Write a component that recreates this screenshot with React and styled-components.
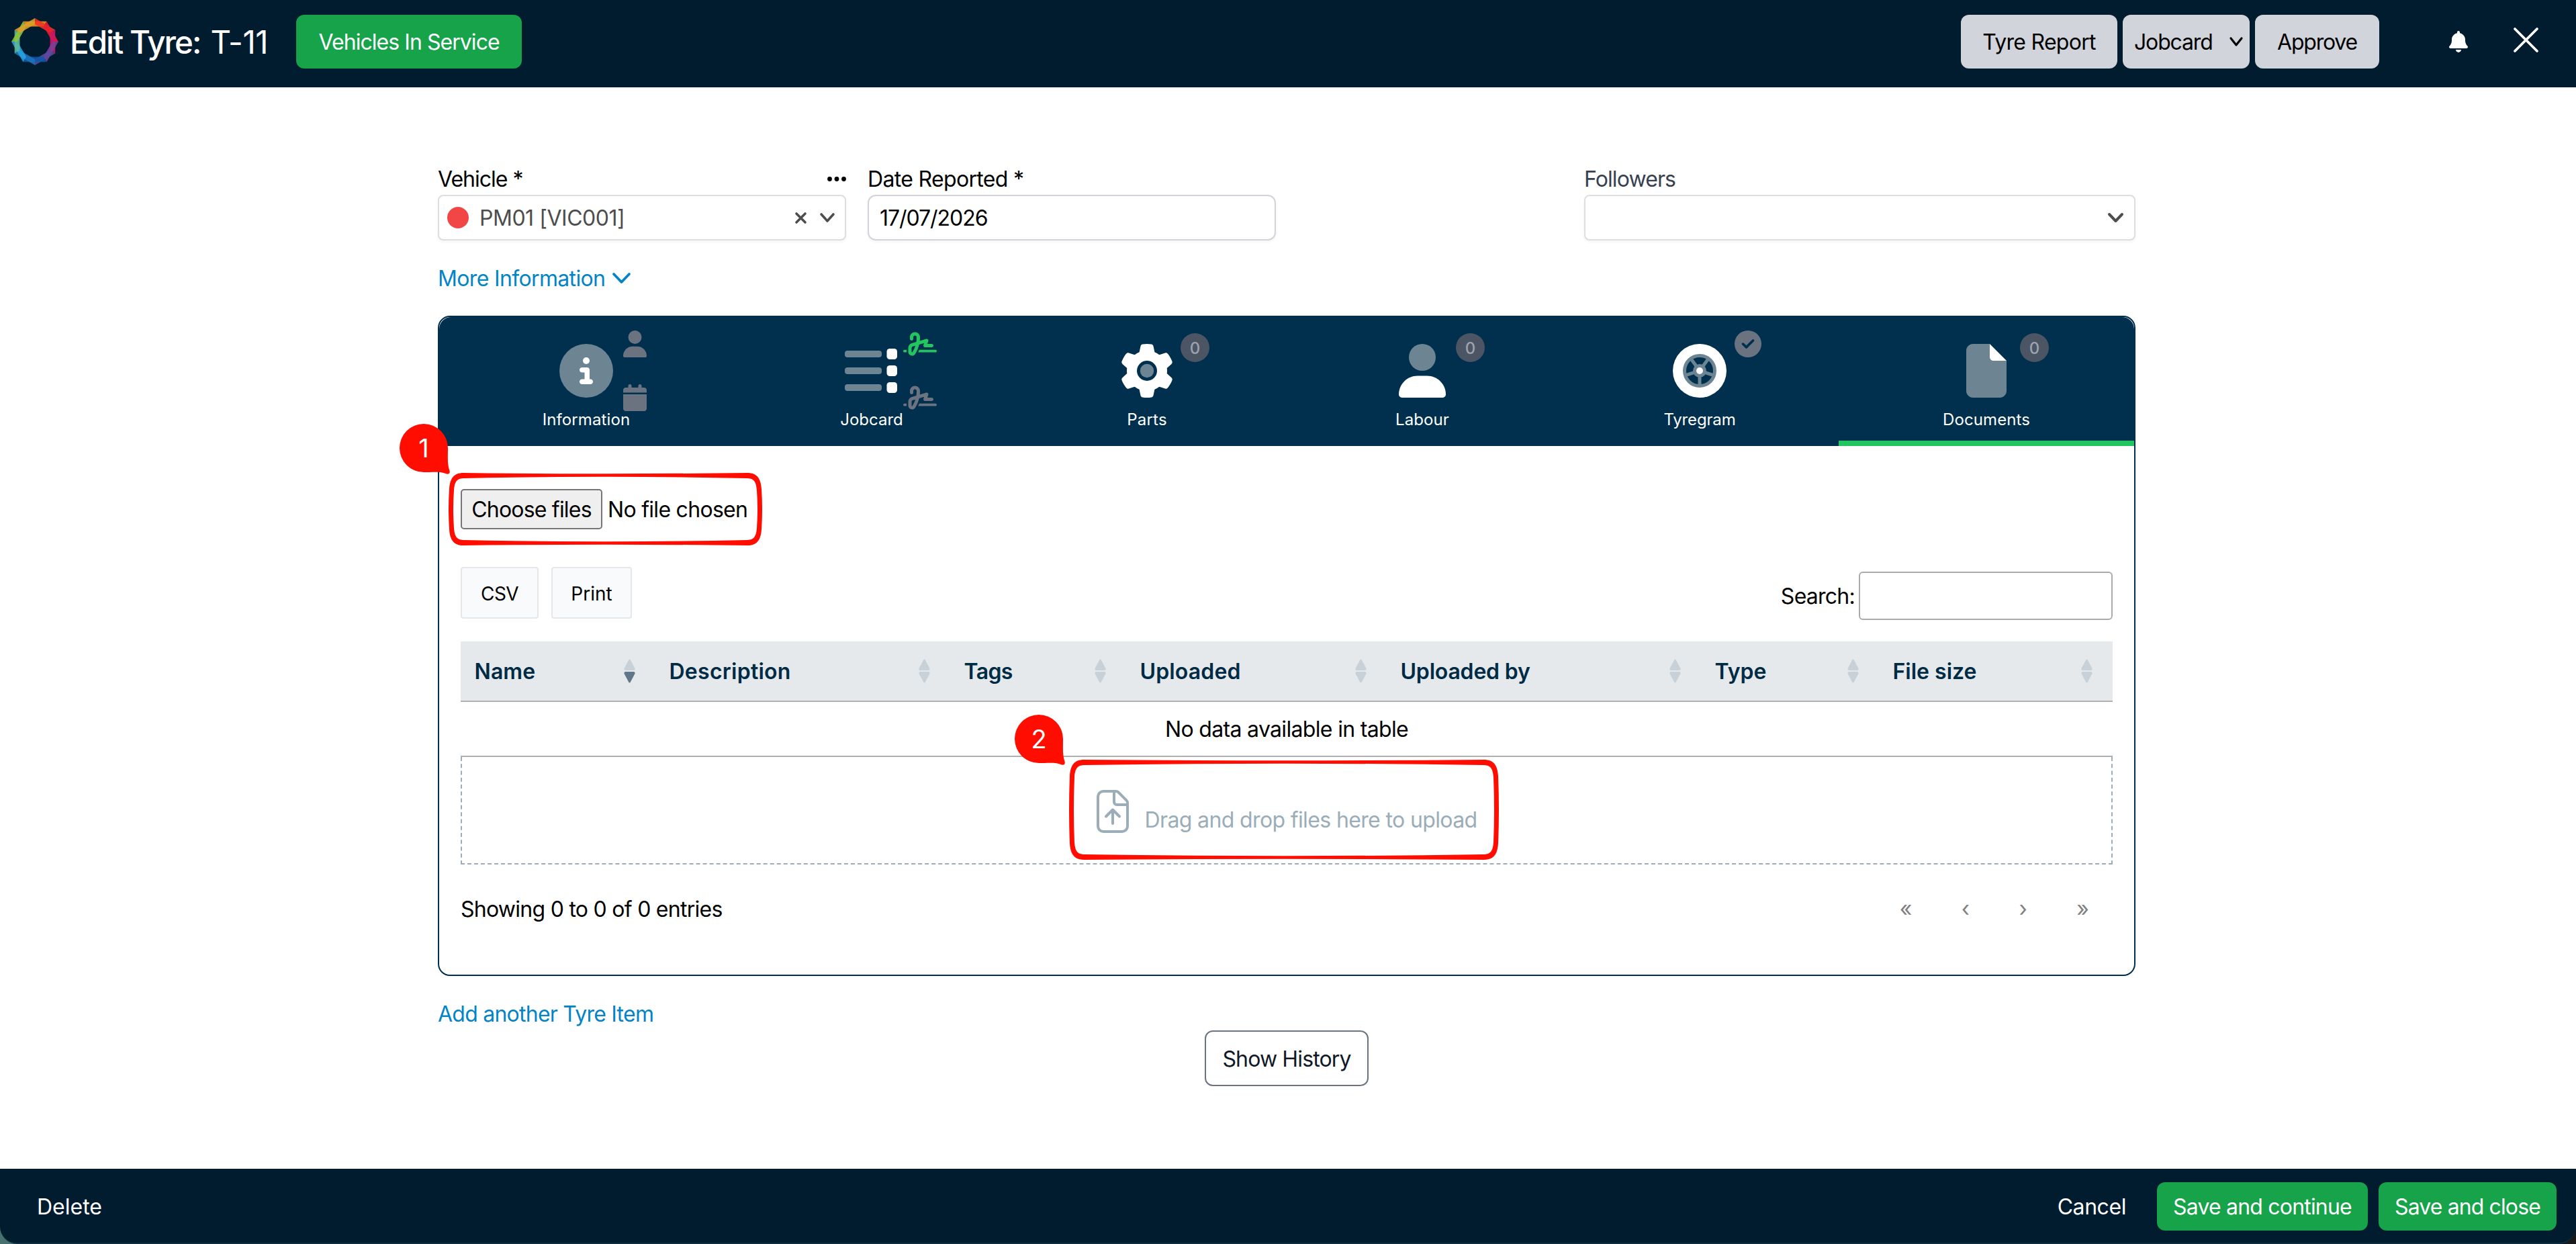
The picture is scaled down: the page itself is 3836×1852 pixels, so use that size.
import React from "react";
import styled, { createGlobalStyle, css } from "styled-components";
import { FaBell, FaCalendar, FaCircleCheck, FaGear, FaSignature, FaUser } from "react-icons/fa6";

const color = {
  ink: "#001c2e",
  navy: "#00304d",
  slate: "#6d8493",
  green: "#16a34a",
  bright: "#22c55e",
  muted: "#6b7280",
  link: "#0284c7",
  drop: "#9aadb8",
  callout: "#ff0d00",
};

const GlobalStyle = createGlobalStyle`
  * { box-sizing: border-box; }
  body {
    margin: 0;
    background: linear-gradient(90deg, #46716f 0%, #2a3a40 50%, #17191b 100%);
    font-family: Inter, "Liberation Sans", sans-serif;
    font-size: 32px;
    line-height: 44px;
    color: #000;
  }
`;

const Label = styled.span`
  white-space: nowrap;
  letter-spacing: ${(p) => p.$ls || 0}px;
`;

const Text = styled(Label)`
  padding-top: 2px;
`;

const Screen = styled.div`
  display: flex;
  flex-direction: column;
  height: 1852px;
`;

/* Top bar */

const TopBar = styled.header`
  display: flex;
  align-items: center;
  flex: none;
  height: 130px;
  padding: 0 56px 6px 17px;
  background: ${color.ink};
  color: #fff;
`;

const Logo = styled.svg`
  width: 70px;
  height: 70px;
  margin-right: 17px;
`;

const Title = styled.h1`
  display: flex;
  gap: 15px;
  margin: 0 42px 0 0;
  font-size: 47.5px;
  line-height: 60px;
  font-weight: 500;
`;

const TitleRef = styled(Text)`
  font-weight: 400;
`;

const filled = css`
  display: flex;
  align-items: center;
  justify-content: center;
  border: 0;
  border-radius: 12px;
  font: inherit;
`;

const GreenButton = styled.button`
  ${filled}
  width: ${(p) => p.$w}px;
  height: ${(p) => p.$h}px;
  padding: 0;
  background: ${color.green};
  color: #fff;
`;

const TopActions = styled.div`
  display: flex;
  gap: 8px;
  margin-left: auto;
`;

const GreyButton = styled.button`
  ${filled}
  width: ${(p) => p.$w}px;
  height: 80px;
  padding: 0;
  background: #d1d5db;
  color: #000;
`;

const GreySelect = styled(GreyButton)`
  justify-content: space-between;
  padding: 0 10px 0 17px;
`;

const BellIcon = styled(FaBell)`
  width: 28px;
  height: 32px;
  margin: 0 68px 0 104px;
`;

const CloseButton = styled.span`
  padding-bottom: 5px;
`;

const Stroke = styled.svg`
  flex: none;
  display: block;
  overflow: visible;
  fill: none;
  stroke: currentColor;
  stroke-width: ${(p) => p.$s || 3.5};
  stroke-linecap: round;
  stroke-linejoin: round;
`;

/* Form */

const Main = styled.main`
  flex: 1;
  padding: 114px 656px 0 652px;
  background: #fff;
`;

const FieldRow = styled.div`
  display: flex;
`;

const Field = styled.div`
  width: ${(p) => p.$w}px;
  margin-left: ${(p) => p.$ml || 0}px;
  color: ${(p) => p.$c || "#000"};
`;

const FieldLabel = styled.div`
  display: flex;
  align-items: center;
  justify-content: space-between;
  height: 44px;
  margin-bottom: 2px;
`;

const Control = styled.div`
  display: flex;
  align-items: center;
  height: 68px;
  padding: ${(p) => p.$p};
  border: 2px solid ${(p) => p.$b || "#dddde2"};
  border-radius: ${(p) => p.$r || 8}px;
  background: #fff;
  color: ${(p) => p.$c || "#4d4d4d"};
  box-shadow: 0 2px 4px rgba(0, 0, 0, 0.05);
`;

const StatusDot = styled.span`
  width: 32px;
  height: 32px;
  margin-right: 16px;
  border-radius: 50%;
  background: #f24646;
`;

const ControlIcons = styled.span`
  display: flex;
  align-items: center;
  gap: 20px;
  margin-left: auto;
`;

const MoreLink = styled.a`
  display: flex;
  align-items: center;
  gap: 11px;
  height: 44px;
  margin: 34px 0;
  color: ${color.link};
`;

/* Tabbed panel */

const Panel = styled.section`
  height: 983px;
  border: 2px solid ${color.navy};
  border-radius: 18px;
`;

const Tabs = styled.nav`
  display: flex;
  height: 192px;
  border-radius: 18px 18px 0 0;
  background: ${color.navy};
`;

const Tab = styled.div`
  position: relative;
  display: flex;
  flex-direction: column;
  align-items: center;
  width: ${(p) => p.$w}px;
  padding-top: 40px;
  color: #fff;
  font-size: 24px;
  line-height: 32px;
  border-bottom: 8px solid ${(p) => (p.$active ? color.bright : color.navy)};
`;

const TabIcon = styled.svg`
  display: block;
  width: ${(p) => p.$w || 80}px;
  height: 80px;
  margin-bottom: 17px;
`;

const TabMark = styled.span`
  position: absolute;
  left: calc(50% + ${(p) => p.$x}px);
  top: ${(p) => p.$y}px;
  display: flex;
  color: ${(p) => p.$c || color.muted};
  svg {
    width: ${(p) => p.$w}px;
    height: 40px;
  }
`;

const CountBadge = styled.span`
  position: absolute;
  left: calc(50% + 50px);
  top: 24px;
  display: flex;
  align-items: center;
  justify-content: center;
  width: 43px;
  height: 43px;
  padding-top: 2px;
  border-radius: 50%;
  background: #4b5563;
  color: #9ca3af;
  font-size: 24px;
  font-weight: 500;
`;

const PanelBody = styled.div`
  padding: 64px 32px 0;
`;

const FilePicker = styled.div`
  position: relative;
  display: inline-flex;
  align-items: center;
  gap: 8px;
  height: 60px;
`;

const FileButton = styled.span`
  display: flex;
  align-items: center;
  justify-content: center;
  width: 211px;
  height: 60px;
  border: 2px solid #767676;
  border-radius: 5px;
  background: #efefef;
`;

const Toolbar = styled.div`
  display: flex;
  gap: 19px;
  height: 79px;
  margin-top: 56px;
`;

const ToolButton = styled.button`
  display: flex;
  align-items: center;
  justify-content: center;
  width: ${(p) => p.$w}px;
  height: 77px;
  padding: 0;
  border: 2px solid #e5e7eb;
  border-radius: 4px;
  background: #f9fafb;
  color: #000;
  font: inherit;
  font-size: 28px;
`;

const Search = styled.label`
  display: flex;
  align-items: center;
  gap: 6px;
  height: 72px;
  margin: 7px 0 0 auto;
`;

const SearchBox = styled.span`
  width: 378px;
  height: 72px;
  border: 2px solid #aaa;
  border-radius: 6px;
`;

/* Documents table */

const HeadRow = styled.div`
  display: grid;
  grid-template-columns: 290px 439px 262px 388px 468px 265px 348px;
  height: 90px;
  margin-top: 32px;
  border-bottom: 2px solid #b0b0b2;
  background: #e5e9ec;
`;

const HeadCell = styled.div`
  display: flex;
  align-items: center;
  justify-content: space-between;
  padding: 0 30px 0 20.5px;
  color: #002b45;
  font-weight: 600;
`;

const EmptyRow = styled.div`
  display: flex;
  align-items: center;
  justify-content: center;
  height: 82px;
  border-bottom: 2px solid #b0b0b2;
`;

const DropZone = styled.div`
  position: relative;
  display: flex;
  justify-content: center;
  align-items: center;
  gap: 24px;
  height: 160px;
  padding-top: 4px;
  border: 2px dashed ${color.drop};
  border-top: 0;
  color: ${color.drop};
`;

const DropLabel = styled(Label)`
  padding-top: 26px;
`;

const TableFoot = styled.div`
  display: flex;
  justify-content: space-between;
  padding-right: 35px;
  margin-top: 43px;
`;

const Pager = styled.div`
  display: flex;
  gap: 73.5px;
  padding-top: 1px;
  color: #808080;
`;

/* Callouts */

const Frame = styled.svg`
  position: absolute;
  left: ${(p) => p.$x}px;
  top: ${(p) => p.$y}px;
  overflow: visible;
  fill: ${color.callout};
`;

const Balloon = styled.div`
  position: absolute;
  z-index: 2;
  left: ${(p) => p.$x}px;
  top: ${(p) => p.$y}px;
  width: 72px;
  height: 72px;
  display: flex;
  align-items: center;
  justify-content: center;
  color: #fff;
  font-size: 38px;
  svg {
    position: absolute;
    left: 0;
    top: 0;
    z-index: -1;
    overflow: visible;
    fill: ${color.callout};
  }
`;

/* Below the panel */

const AddLink = styled.a`
  display: block;
  margin: 35px 0 2px;
  color: ${color.link};
`;

const HistoryButton = styled.button`
  display: flex;
  align-items: center;
  justify-content: center;
  width: 244px;
  height: 83px;
  margin: 0 auto;
  padding: 0;
  border: 2px solid ${color.muted};
  border-radius: 12px;
  background: #fff;
  color: #111827;
  font: inherit;
`;

const Footer = styled.footer`
  display: flex;
  align-items: center;
  flex: none;
  height: 112px;
  padding: 2px 29px 0 55px;
  border-bottom: 2px solid #0d2c40;
  border-radius: 0 0 26px 26px;
  background: ${color.ink};
  color: #fff;
`;

const FooterActions = styled.div`
  display: flex;
  align-items: center;
  gap: 16px;
  margin-left: auto;
`;

const CancelLink = styled(Text)`
  margin-right: 30px;
`;

const ringColors = [
  "#f7901e", "#ef3324", "#ed1c30", "#c9176a", "#7d3f98", "#5a4a9f",
  "#0f56a8", "#1c75bc", "#29a3e0", "#5fb89a", "#8cc63f", "#dba12c",
];

function RingLogo() {
  const at = (deg, r) => {
    const a = ((deg - 90) * Math.PI) / 180;
    return `${35 + r * Math.cos(a)},${35 + r * Math.sin(a)}`;
  };
  return (
    <Logo viewBox="0 0 70 70">
      {ringColors.map((c, i) => (
        <polygon
          key={c}
          points={[at(i * 30 - 30, 35), at(i * 30 + 30, 35), at(i * 30 + 30, 26), at(i * 30 - 30, 26)].join(" ")}
          fill={c}
          fillOpacity="0.88"
        />
      ))}
    </Logo>
  );
}

function Chevron({ w = 20, h = 10, s }) {
  return (
    <Stroke width={w} height={h} viewBox={`0 0 ${w} ${h}`} $s={s}>
      <path d={`M2 0L${w / 2} ${h}L${w - 2} 0`} />
    </Stroke>
  );
}

function Cross({ size, s }) {
  return (
    <Stroke width={size} height={size} viewBox={`0 0 ${size} ${size}`} $s={s}>
      <path d={`M2 2L${size - 2} ${size - 2}M${size - 2} 2L2 ${size - 2}`} />
    </Stroke>
  );
}

function SortArrows({ down }) {
  return (
    <svg width="17" height="36" viewBox="0 0 17 36">
      <path d="M7.2 1.6Q8.5-.4 9.8 1.6L16.4 14Q17.2 17 14.5 17H2.5Q-.2 17 .6 14Z" fill="#c8d1d8" />
      <path d="M7.2 34.4Q8.5 36.4 9.8 34.4L16.4 22Q17.2 19 14.5 19H2.5Q-.2 19 .6 22Z" fill={down ? "#5f7788" : "#c8d1d8"} />
    </svg>
  );
}

function CalloutFrame({ x, y, w, h }) {
  const cx = w / 2;
  const cy = h / 2;
  const outer = `M22 0Q${cx} 2.5 ${w - 22} 0C${w - 8} 0 ${w - 2} 8 ${w - 1} 24Q${w + 1} ${cy} ${w - 1} ${h - 24}C${w - 2} ${h - 8} ${w - 8} ${h} ${w - 22} ${h}Q${cx} ${h - 2.5} 22 ${h}C8 ${h} 2 ${h - 8} 1 ${h - 24}Q-1 ${cy} 1 24C2 8 8 0 22 0Z`;
  const inner = `M24 8Q${cx} 3.5 ${w - 24} 8C${w - 13} 8 ${w - 9} 12 ${w - 8} 26Q${w - 6} ${cy} ${w - 8} ${h - 26}C${w - 9} ${h - 12} ${w - 13} ${h - 8} ${w - 24} ${h - 8}Q${cx} ${h - 3.5} 24 ${h - 8}C13 ${h - 8} 9 ${h - 12} 8 ${h - 26}Q6 ${cy} 8 26C9 12 13 8 24 8Z`;
  return (
    <Frame $x={x} $y={y} width={w} height={h}>
      <path fillRule="evenodd" d={outer + inner} />
    </Frame>
  );
}

function CalloutNumber({ x, y, children }) {
  return (
    <Balloon $x={x} $y={y}>
      <svg width="72" height="72">
        <path d="M36 0A36 36 0 0 1 72 36C72 50 71 60 74.6 70Q75.5 75.5 70 74.5C62 70.500 50 72 36 72A36 36 0 0 1 36 0Z" />
      </svg>
      {children}
    </Balloon>
  );
}

const spokes = [18, 90, 162, 234, 306];

const columns = [
  ["Name", 0.1], ["Description", 0.26], ["Tags", -0.6], ["Uploaded", 0.15],
  ["Uploaded by", -0.19], ["Type", 0], ["File size", 0],
];

export default function App() {
  return (
    <Screen>
      <GlobalStyle />
      <TopBar>
        <RingLogo />
        <Title>
          <Text $ls={-1.95}>Edit Tyre:</Text>
          <TitleRef $ls={-0.5}>T-11</TitleRef>
        </Title>
        <GreenButton $w={336} $h={80}><Text $ls={-0.95}>Vehicles In Service</Text></GreenButton>
        <TopActions>
          <GreyButton $w={233}><Text $ls={-0.71}>Tyre Report</Text></GreyButton>
          <GreySelect $w={189}>
            <Text $ls={-1.15}>Jobcard</Text>
            <Chevron w={20} h={10} s={3.2} />
          </GreySelect>
          <GreyButton $w={185}><Text $ls={-1.2}>Approve</Text></GreyButton>
        </TopActions>
        <BellIcon />
        <CloseButton><Cross size={37} s={3.8} /></CloseButton>
      </TopBar>

      <Main>
        <FieldRow>
          <Field $w={608}>
            <FieldLabel>
              <Text $ls={-1}>Vehicle *</Text>
              <svg width="28" height="7" viewBox="0 0 28 7">
                <circle cx="3.500" cy="3.500" r="3.400" />
                <circle cx="14" cy="3.500" r="3.400" />
                <circle cx="24.500" cy="3.500" r="3.400" />
              </svg>
            </FieldLabel>
            <Control $p="0 15px 0 12px">
              <StatusDot />
              <Text $ls={-0.47}>PM01 [VIC001]</Text>
              <ControlIcons>
                <Cross size={17} s={3.6} />
                <Chevron w={22} h={10} s={3.6} />
              </ControlIcons>
            </Control>
          </Field>
          <Field $w={608} $ml={32}>
            <FieldLabel><Text $ls={-0.67}>Date Reported *</Text></FieldLabel>
            <Control $p="0 16px" $b="#d1d5db" $r={12} $c="#000">
              <Text $ls={-1.05}>17/07/2026</Text>
            </Control>
          </Field>
          <Field $w={821} $ml={459} $c="#374151">
            <FieldLabel><Text $ls={-0.9}>Followers</Text></FieldLabel>
            <Control $p="0 16px">
              <ControlIcons><Chevron w={23} h={10} s={4} /></ControlIcons>
            </Control>
          </Field>
        </FieldRow>

        <MoreLink>
          <Text $ls={-0.65}>More Information</Text>
          <Chevron w={27} h={12} s={3.8} />
        </MoreLink>

        <Panel>
          <Tabs>
            <Tab $w={438}>
              <TabIcon viewBox="0 0 512 512">
                <circle cx="256" cy="256" r="256" fill={color.slate} />
                <circle cx="256" cy="160" r="32" fill="#fff" />
                <path fill="#fff" d="M216 336h24v-64h-24c-13.300 0-24-10.700-24-24s10.700-24 24-24h48c13.300 0 24 10.700 24 24v88h8c13.300 0 24 10.700 24 24s-10.700 24-24 24h-80c-13.300 0-24-10.700-24-24s10.700-24 24-24z" />
              </TabIcon>
              <Label $ls={0.1}>Information</Label>
              <TabMark $x={55} $y={20} $w={35}><FaUser /></TabMark>
              <TabMark $x={55} $y={100} $w={35}><FaCalendar /></TabMark>
            </Tab>
            <Tab $w={412}>
              <TabIcon viewBox="0 0 80 80">
                {[15, 40, 65].map((y) => (
                  <g key={y}>
                    <rect x="0" y={y - 5} width="55" height="10" rx="4" fill={color.slate} />
                    <rect x="62.500" y={y - 8} width="15.500" height="16" rx="4.500" fill="#fff" />
                  </g>
                ))}
              </TabIcon>
              <Label>Jobcard</Label>
              <TabMark $x={47} $y={20} $w={50} $c={color.bright}><FaSignature /></TabMark>
              <TabMark $x={47} $y={100} $w={50}><FaSignature /></TabMark>
            </Tab>
            <Tab $w={408}>
              <TabIcon viewBox="0 0 80 80">
                <FaGear size={80} color="#fff" />
                <circle cx="40" cy="40" r="15" fill={color.navy} />
                <circle cx="40" cy="40" r="10.200" fill={color.slate} />
              </TabIcon>
              <Label $ls={0.25}>Parts</Label>
              <CountBadge>0</CountBadge>
            </Tab>
            <Tab $w={412}>
              <TabIcon $w={70} viewBox="0 0 448 512">
                <circle cx="224" cy="128" r="128" fill={color.slate} />
                <path fill="#fff" d="M178.300 304C79.800 304 0 383.800 0 482.300C0 498.700 13.300 512 29.700 512H418.300c16.400 0 29.700-13.300 29.700-29.700C448 383.800 368.200 304 269.700 304H178.300z" />
              </TabIcon>
              <Label $ls={0.1}>Labour</Label>
              <CountBadge>0</CountBadge>
            </Tab>
            <Tab $w={414}>
              <TabIcon viewBox="0 0 80 80">
                <circle cx="40" cy="40" r="40" fill="#fff" />
                <circle cx="40" cy="40" r="22.500" fill={color.navy} stroke={color.slate} strokeWidth="5" />
                {spokes.map((deg) => (
                  <path key={deg} d="M48 40H61" stroke={color.slate} strokeWidth="5" transform={`rotate(${deg} 40 40)`} />
                ))}
                <circle cx="40" cy="40" r="10" fill={color.slate} />
                <circle cx="40" cy="40" r="5" fill="#fff" />
              </TabIcon>
              <Label $ls={-0.16}>Tyregram</Label>
              <TabMark $x={52} $y={20} $w={40}><FaCircleCheck /></TabMark>
            </Tab>
            <Tab $w={440} $active>
              <TabIcon $w={60} viewBox="0 0 384 512">
                <path fill={color.slate} d="M0 64C0 28.700 28.700 0 64 0H224V128c0 17.700 14.300 32 32 32H384V448c0 35.300-28.700 64-64 64H64c-35.300 0-64-28.700-64-64V64z" />
                <path fill="#fff" d="M384 160H256c-17.700 0-32-14.300-32-32V0L384 160z" />
              </TabIcon>
              <Label $ls={0.1}>Documents</Label>
              <CountBadge>0</CountBadge>
            </Tab>
          </Tabs>

          <PanelBody>
            <FilePicker>
              <FileButton><Text $ls={-0.8}>Choose files</Text></FileButton>
              <Text $ls={-0.71}>No file chosen</Text>
              <CalloutFrame x={-18} y={-24} w={467} h={108} />
              <CalloutNumber x={-91} y={-97}>1</CalloutNumber>
            </FilePicker>

            <Toolbar>
              <ToolButton $w={116}><Text $ls={-0.6}>CSV</Text></ToolButton>
              <ToolButton $w={120}><Text>Print</Text></ToolButton>
              <Search>
                <Text $ls={-0.75}>Search:</Text>
                <SearchBox />
              </Search>
            </Toolbar>

            <HeadRow>
              {columns.map(([label, ls], i) => (
                <HeadCell key={label}>
                  <Text $ls={ls}>{label}</Text>
                  <SortArrows down={i === 0} />
                </HeadCell>
              ))}
            </HeadRow>
            <EmptyRow><Text $ls={-0.67}>No data available in table</Text></EmptyRow>
            <DropZone>
              <Stroke width="48" height="64" viewBox="0 0 48 64" $s={4}>
                <path d="M10 2H28.500a6 6 0 0 1 4.200 1.700L44.300 15.300A6 6 0 0 1 46 19.500V54a8 8 0 0 1-8 8H10a8 8 0 0 1-8-8V10a8 8 0 0 1 8-8z" />
                <path d="M26 3V18a4 4 0 0 0 4 4H45" />
                <path d="M24 50V31M14 39.500L24 29.500L34 39.500" />
              </Stroke>
              <DropLabel $ls={-0.63}>Drag and drop files here to upload</DropLabel>
              <CalloutFrame x={904} y={4} w={640} h={149} />
              <CalloutNumber x={823} y={-63}>2</CalloutNumber>
            </DropZone>
            <TableFoot>
              <Text $ls={-0.73}>Showing 0 to 0 of 0 entries</Text>
              <Pager>
                <span>«</span>
                <span>‹</span>
                <span>›</span>
                <span>»</span>
              </Pager>
            </TableFoot>
          </PanelBody>
        </Panel>

        <AddLink><Label $ls={-0.76}>Add another Tyre Item</Label></AddLink>
        <HistoryButton><Text $ls={-0.87}>Show History</Text></HistoryButton>
      </Main>

      <Footer>
        <Text>Delete</Text>
        <FooterActions>
          <CancelLink $ls={-0.44}>Cancel</CancelLink>
          <GreenButton $w={314} $h={72}><Text $ls={-0.81}>Save and continue</Text></GreenButton>
          <GreenButton $w={265} $h={72}><Text $ls={-0.89}>Save and close</Text></GreenButton>
        </FooterActions>
      </Footer>
    </Screen>
  );
}
